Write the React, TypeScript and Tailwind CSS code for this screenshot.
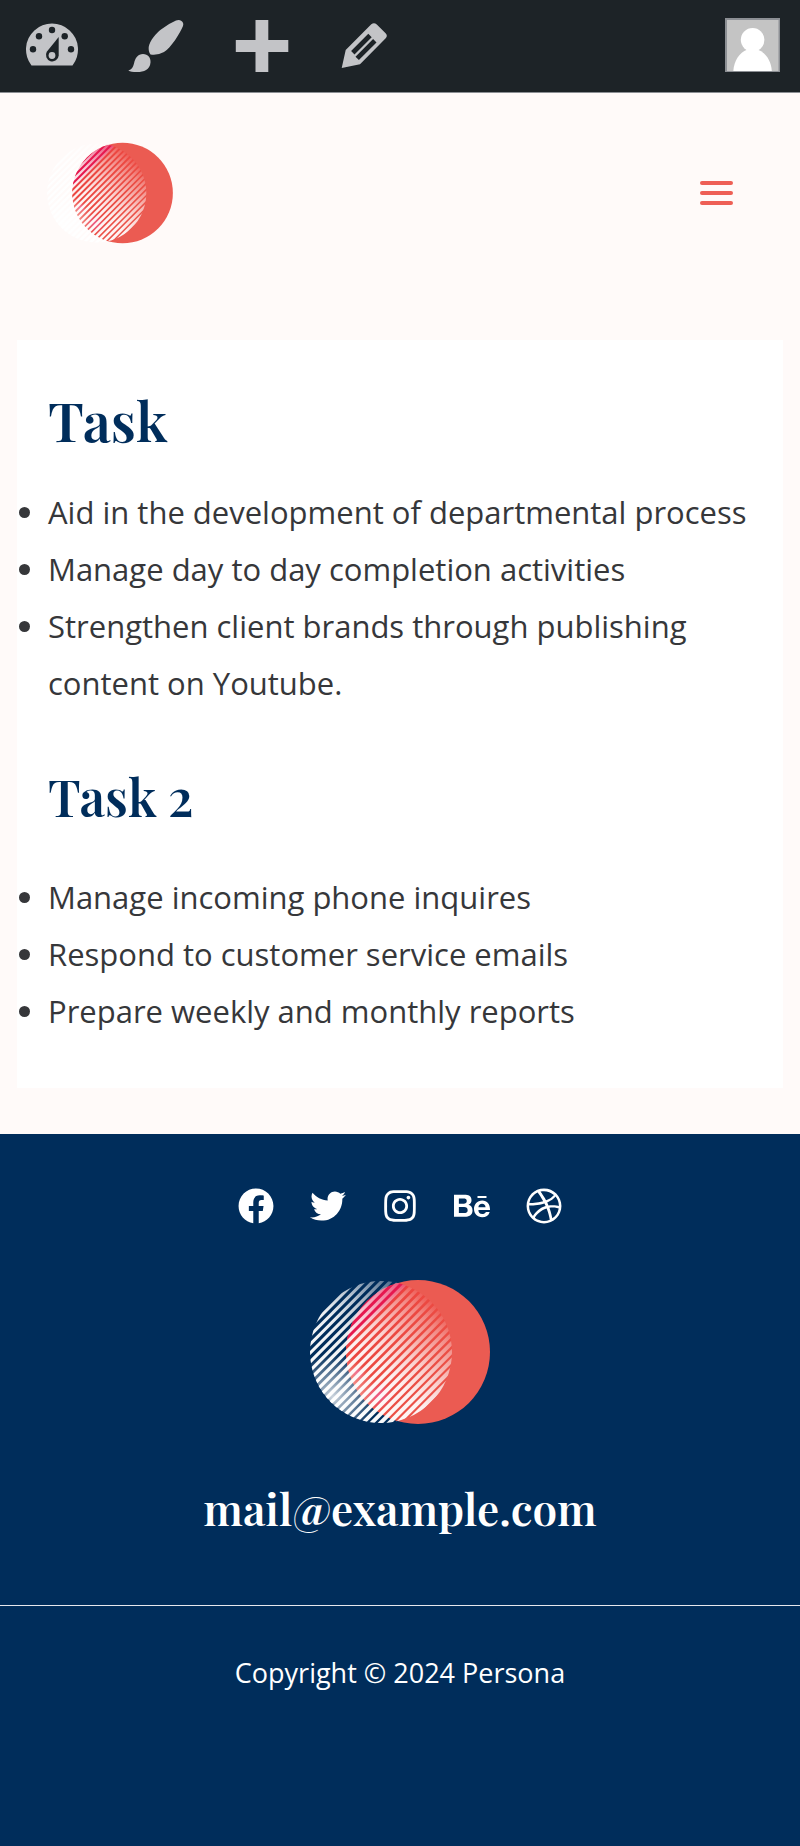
import React, { useId } from "react";
import {
  FaBehance,
  FaDribbble,
  FaFacebook,
  FaInstagram,
  FaTwitter,
} from "react-icons/fa";

function Logo({ className }: { className: string }) {
  const id = useId().replace(/[^a-zA-Z0-9]/g, "");
  const stripes = Array.from({ length: 23 }, (_, i) => ({
    y: -68 + i * 6.2,
    width: 3 + i * 0.05,
  }));
  return (
    <svg viewBox="0 0 182 146" className={className} aria-hidden="true">
      <defs>
        <clipPath id={`${id}left`}>
          <circle cx="72" cy="73" r="71" />
        </clipPath>
        <linearGradient id={`${id}red`} gradientUnits="userSpaceOnUse" x1="48" y1="20" x2="158" y2="130">
          <stop offset="0" stopColor="#e6124f" />
          <stop offset="0.14" stopColor="#e6194f" />
          <stop offset="0.175" stopColor="#ec4640" />
          <stop offset="0.7" stopColor="#eb5046" />
          <stop offset="1" stopColor="#eb5b52" />
        </linearGradient>
        <linearGradient id={`${id}fade`} gradientUnits="userSpaceOnUse" x1="-71" y1="0" x2="73" y2="0">
          <stop offset="0" stopColor="#fff" />
          <stop offset="0.42" stopColor="#fff" stopOpacity="0.92" />
          <stop offset="0.6" stopColor="#fff" stopOpacity="0.75" />
          <stop offset="0.88" stopColor="#fff" stopOpacity="0.34" />
          <stop offset="1" stopColor="#fff" stopOpacity="0.08" />
        </linearGradient>
        <radialGradient id={`${id}haze`} gradientUnits="userSpaceOnUse" cx="24" cy="118" r="44">
          <stop offset="0" stopColor="#fff" stopOpacity="0.8" />
          <stop offset="0.5" stopColor="#fff" stopOpacity="0.4" />
          <stop offset="1" stopColor="#fff" stopOpacity="0" />
        </radialGradient>
        <radialGradient id={`${id}pink`}>
          <stop offset="0" stopColor="#ee5f9c" stopOpacity="0.8" />
          <stop offset="1" stopColor="#ee5f9c" stopOpacity="0" />
        </radialGradient>
      </defs>
      <circle cx="109" cy="73" r="72" fill="#eb5b52" />
      <g clipPath={`url(#${id}left)`}>
        <circle cx="109" cy="73" r="72" fill={`url(#${id}red)`} />
        <circle cx="70" cy="117" r="14" fill={`url(#${id}pink)`} />
        <circle cx="49" cy="94" r="7" fill={`url(#${id}pink)`} />
        <circle cx="72" cy="73" r="71" fill={`url(#${id}haze)`} />
        <g transform="translate(72 73) rotate(-45)">
          {stripes.map((s) => (
            <rect key={s.y} x="-72" y={s.y - s.width / 2} width="144" height={s.width} fill={`url(#${id}fade)`} />
          ))}
        </g>
      </g>
    </svg>
  );
}

function DashboardIcon() {
  return (
    <svg viewBox="0 0 60 60" className="size-15" aria-hidden="true">
      <path d="M9.5 49.5A26 26 0 1 1 50.5 49.5Z" fill="#c3c4c7" />
      <g fill="#1d2327">
        <circle cx="30" cy="14" r="3.2" />
        <circle cx="17" cy="20.3" r="3.2" />
        <circle cx="42.7" cy="20.3" r="3.2" />
        <circle cx="11" cy="33.2" r="3.2" />
        <circle cx="49" cy="33.2" r="3.2" />
        <path d="M36.7 21V39.5A6.4 6.4 0 1 1 24.8 35.8Z" />
      </g>
      <circle cx="30" cy="39.5" r="3.4" fill="#c3c4c7" />
    </svg>
  );
}

function BrushIcon() {
  return (
    <svg viewBox="0 0 60 60" className="size-15" fill="#c3c4c7" aria-hidden="true">
      <path d="M50 4.6Q53 3.2 55.5 5Q58 7 57 10C54 17 45 32 38 36Q31 39.8 24.5 38.5Q22.3 36 22.7 31C24 24 30 17.5 35 13.5Q43 7.5 50 4.6Z" />
      <path d="M17 38C22 38 25 42 24.5 46.5C24 54 17 56.2 10.7 56C7 56 4 55.5 2.3 54.5C6 53.5 7 51 8 47.5C9 42 12 38 17 38Z" />
    </svg>
  );
}

function PlusIcon() {
  return (
    <svg viewBox="0 0 60 60" className="size-15" fill="#c3c4c7" aria-hidden="true">
      <path d="M25.5 4H38.3V24H58.3V36H38.3V56H25.5V36H5.8V24H25.5Z" />
    </svg>
  );
}

function PencilIcon() {
  return (
    <svg viewBox="0 0 60 60" className="size-15" aria-hidden="true">
      <path d="M7.7 52L11.7 34L37.3 8.3Q40 6 42.8 8.5L51.6 17.3Q54 20 51.7 22.3L26 48.3Z" fill="#c3c4c7" />
      <path d="M36 19.5L18.8 36.7M40.8 24.8L23.2 42.4" stroke="#1d2327" strokeWidth="4.8" />
    </svg>
  );
}

function Avatar() {
  return (
    <svg viewBox="0 0 55 56" className="h-14 w-[55px]" aria-hidden="true">
      <rect width="55" height="54" fill="#8c8f94" />
      <rect x="2" y="2" width="51.5" height="51" fill="#c4c4c4" />
      <circle cx="27.6" cy="21.8" r="11.8" fill="#fff" />
      <path d="M8.3 53C9 43 14.5 34.5 22 31.8H33C41 35 46.3 43 46.8 53Z" fill="#fff" />
    </svg>
  );
}

const tools = [
  { label: "Dashboard", Icon: DashboardIcon },
  { label: "Customize", Icon: BrushIcon },
  { label: "New", Icon: PlusIcon },
  { label: "Edit", Icon: PencilIcon },
];

const socials = [
  { label: "Facebook", Icon: FaFacebook },
  { label: "Twitter", Icon: FaTwitter },
  { label: "Instagram", Icon: FaInstagram },
  { label: "Behance", Icon: FaBehance },
  { label: "Dribbble", Icon: FaDribbble },
];

const headingFont = "font-['Playfair_Display','Liberation_Serif',serif] font-semibold";

function TaskList({ items, className }: { items: string[]; className: string }) {
  return (
    <ul className={`list-disc text-[31px] leading-[57px] text-[#36373a] ${className}`}>
      {items.map((item) => (
        <li key={item}>{item}</li>
      ))}
    </ul>
  );
}

export default function App() {
  return (
    <div className="flex min-h-screen flex-col bg-[#fffaf9] font-['Open_Sans',sans-serif]">
      <nav aria-label="Toolbar" className="flex h-[93px] items-center justify-between border-b border-[#8c8f94] bg-[#1d2327] pr-5">
        <div className="flex">
          {tools.map(({ label, Icon }) => (
            <a key={label} href="#" aria-label={label} className="flex w-26 justify-center">
              <Icon />
            </a>
          ))}
        </div>
        <a href="#" aria-label="Profile">
          <Avatar />
        </a>
      </nav>

      <header className="flex h-50 items-center justify-between pr-[67px] pl-[46px]">
        <a href="#" aria-label="Home">
          <Logo className="h-[102px] w-32" />
        </a>
        <button type="button" aria-label="Menu" className="flex flex-col gap-1.5">
          <span className="h-1 w-[33px] rounded-full bg-[#ee5f56]" />
          <span className="h-1 w-[33px] rounded-full bg-[#ee5f56]" />
          <span className="h-1 w-[33px] rounded-full bg-[#ee5f56]" />
        </button>
      </header>

      <main className="px-[17px] pt-[47px] pb-[46px]">
        <article className="bg-white px-[31px] pt-[43px] pb-12">
          <h1 className={`${headingFont} text-[55px] leading-[72px] text-[#002d5b]`}>Task</h1>
          <TaskList
            className="mt-[29px]"
            items={[
              "Aid in the development of departmental process",
              "Manage day to day completion activities",
              "Strengthen client brands through publishing content on Youtube.",
            ]}
          />
          <h2 className={`${headingFont} mt-13 text-[50px] leading-[66px] text-[#002d5b]`}>Task 2</h2>
          <TaskList
            className="mt-[39px]"
            items={[
              "Manage incoming phone inquires",
              "Respond to customer service emails",
              "Prepare weekly and monthly reports",
            ]}
          />
        </article>
      </main>

      <footer className="grow bg-[#002d5b] pt-[54px] text-center text-white">
        <div className="flex justify-center gap-9">
          {socials.map(({ label, Icon }) => (
            <a key={label} href="#" aria-label={label}>
              <Icon className="size-9" />
            </a>
          ))}
        </div>
        <div className="mt-[55px] flex justify-center">
          <Logo className="h-[146px] w-[182px]" />
        </div>
        <p className={`${headingFont} mt-[53px] text-[44px] leading-[60px]`}>
          <a href="mailto:mail@example.com">mail@example.com</a>
        </p>
        <div className="mt-[67px] border-t border-[#e6e8ee] pt-[43px] pb-36">
          <p className="text-[27px] leading-[48px]">Copyright © 2024 Persona</p>
        </div>
      </footer>
    </div>
  );
}
